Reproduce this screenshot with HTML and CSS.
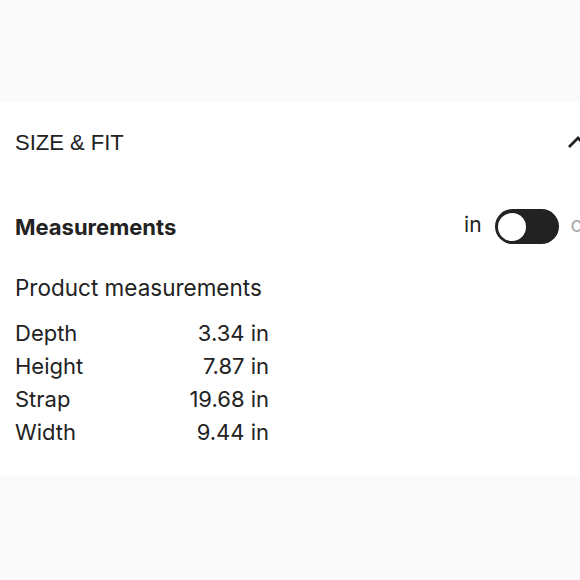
FILE: index.html
```html
<!DOCTYPE html>
<html>
<head>
<meta charset="utf-8">
<link rel="stylesheet" href="styles.css">
</head>
<body>
<div class="page">
  <div class="band band-top"></div>
  <section class="panel">
    <div class="panel-head">
      <h2 class="panel-title">SIZE &amp; FIT</h2>
      <svg class="chevron" width="22" height="14" viewBox="0 0 22 14" aria-hidden="true">
        <path d="M2 12 L11 3 L20 12" fill="none" stroke="#222" stroke-width="2.8"/>
      </svg>
    </div>
    <div class="measure-row">
      <h3 class="measure-title">Measurements</h3>
      <div class="units">
        <span class="unit unit-active">in</span>
        <span class="toggle"><span class="knob"></span></span>
        <span class="unit unit-off">cm</span>
      </div>
    </div>
    <p class="sub">Product measurements</p>
    <div class="dims">
      <span class="dim-label">Depth</span><span class="dim-val">3.34 in</span>
      <span class="dim-label">Height</span><span class="dim-val">7.87 in</span>
      <span class="dim-label">Strap</span><span class="dim-val">19.68 in</span>
      <span class="dim-label">Width</span><span class="dim-val">9.44 in</span>
    </div>
  </section>
  <div class="band band-bottom"></div>
</div>
</body>
</html>
```

FILE: styles.css
```css
html, body {
  margin: 0;
  padding: 0;
  overflow: hidden;
  background: #fafafa;
}
.page {
  width: 604px;
  height: 580px;
  display: flex;
  flex-direction: column;
  color: #222;
  font-family: Inter, "Liberation Sans", sans-serif;
}
.band {
  background: #fafafa;
}
.band-top {
  height: 102px;
  flex: none;
}
.band-bottom {
  flex: 1;
}
.panel {
  background: #fff;
  padding: 28px 15px 27px 15px;
}
.panel-head {
  display: flex;
  justify-content: space-between;
  align-items: center;
  height: 26px;
}
.panel-title {
  margin: 0;
  font-family: "Liberation Sans", Arial, sans-serif;
  font-weight: 400;
  font-size: 22px;
  line-height: 26px;
  color: #222;
}
.chevron {
  display: block;
  margin-top: -2px;
}
.measure-row {
  margin-top: 53px;
  height: 35px;
  display: flex;
  justify-content: space-between;
  align-items: center;
}
.measure-title {
  margin: 0;
  font-size: 22px;
  font-weight: 700;
  line-height: 24px;
}
.units {
  display: flex;
  align-items: center;
  gap: 12px;
  margin-right: -12px;
}
.unit {
  font-size: 21px;
  line-height: 24px;
  margin-top: -4px;
}
.unit-active {
  margin-right: 1px;
}
.unit-off {
  color: #aaa;
}
.toggle {
  width: 64px;
  height: 35px;
  border-radius: 18px;
  background: #222;
  display: flex;
  align-items: center;
  padding-left: 3px;
  box-sizing: border-box;
}
.knob {
  width: 28px;
  height: 28px;
  border-radius: 50%;
  background: #fff;
}
.sub {
  margin: 31px 0 0 0;
  font-size: 22.5px;
  line-height: 26px;
}
.dims {
  margin-top: 16px;
  width: 254px;
  display: grid;
  grid-template-columns: 1fr auto;
  font-size: 22px;
  line-height: 33px;
}
.dim-val {
  text-align: right;
}
```
